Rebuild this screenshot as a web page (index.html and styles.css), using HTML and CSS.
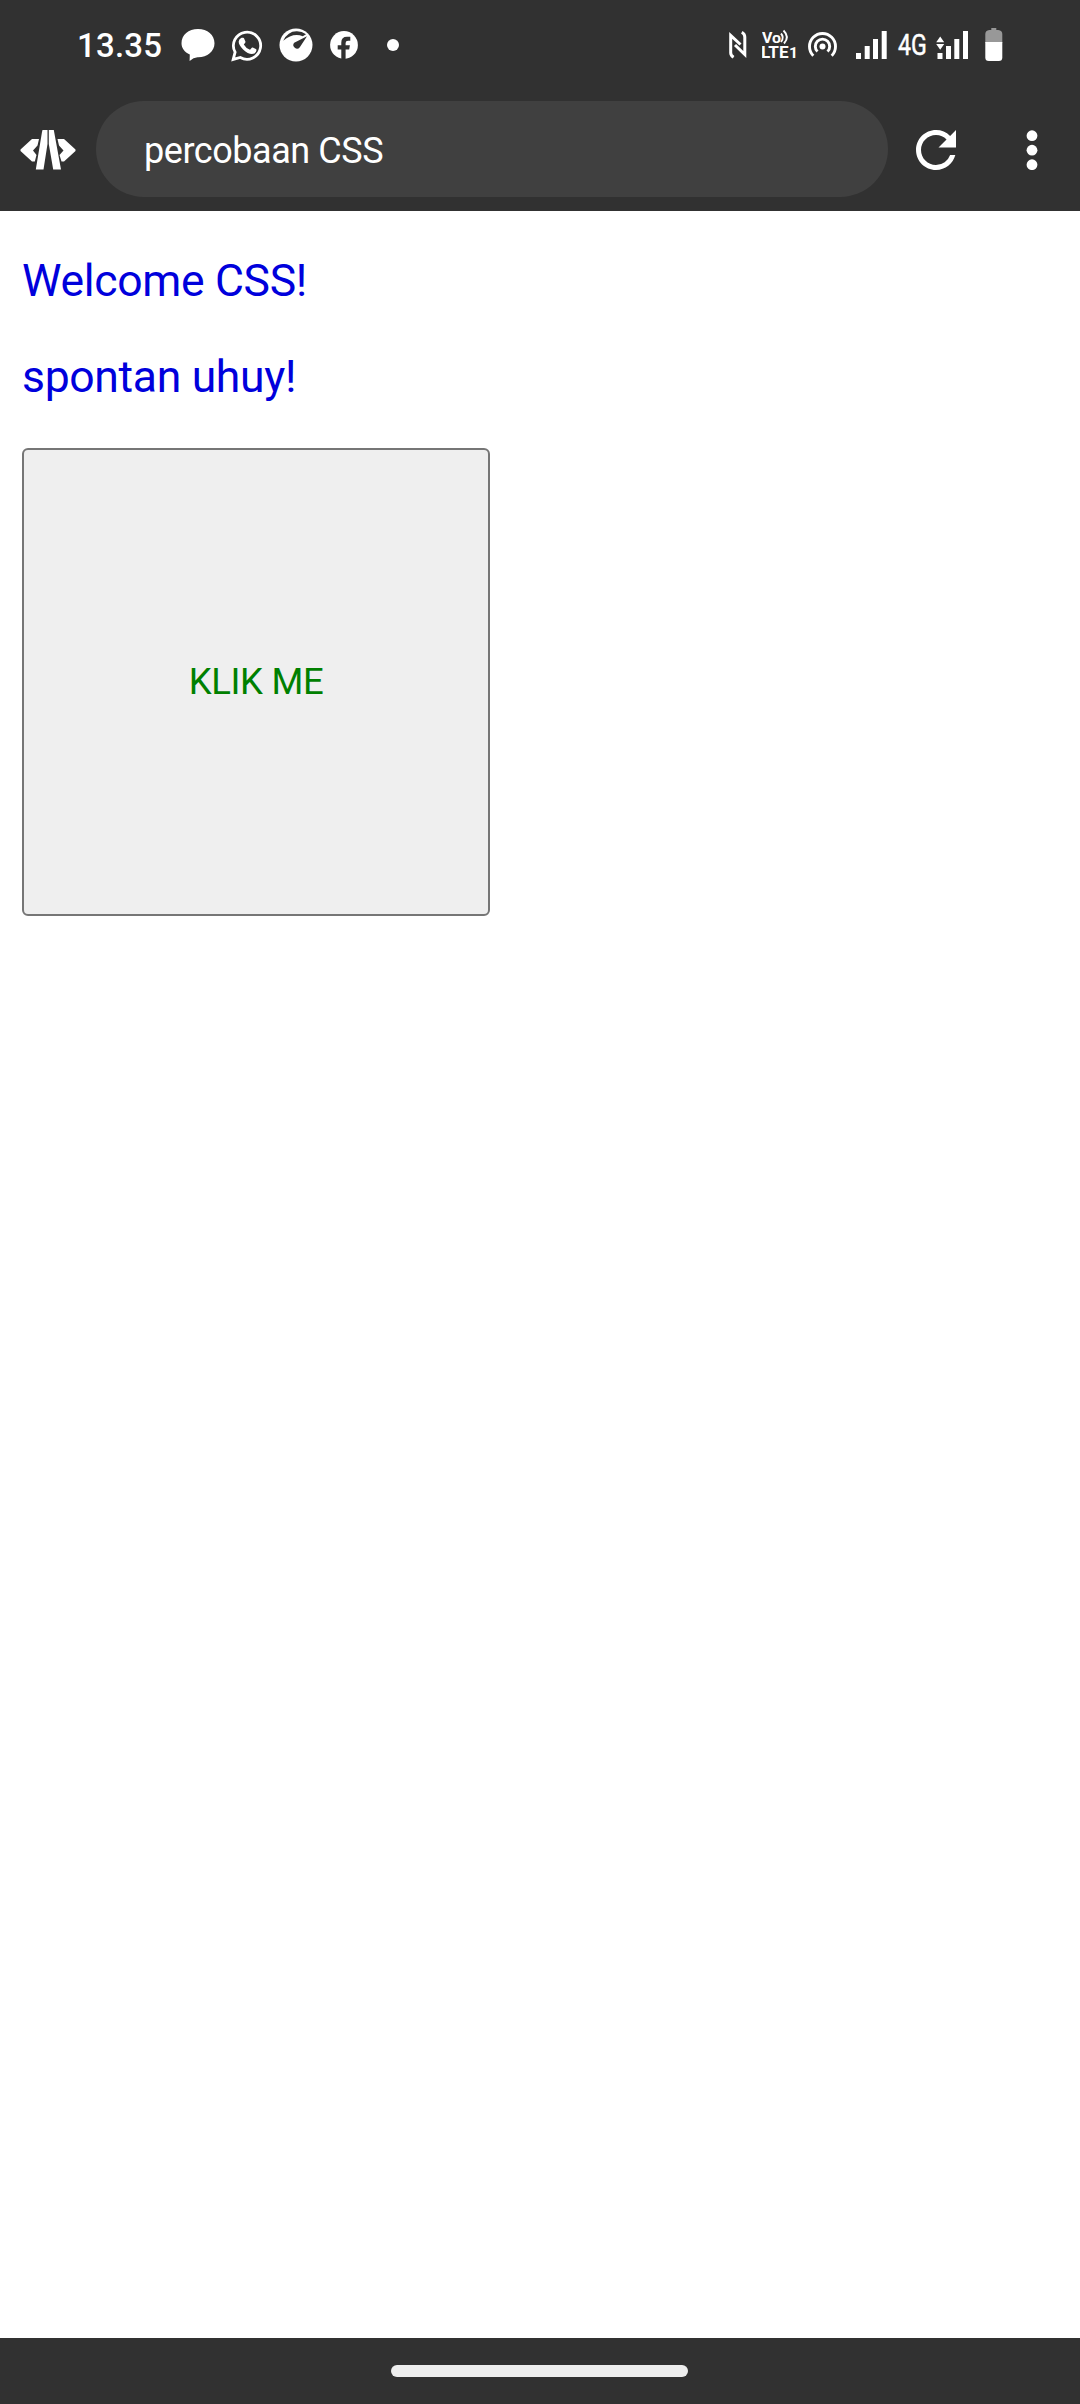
FILE: index.html
```html
<!DOCTYPE html>
<html lang="id">
<head>
<meta charset="utf-8">
<title>percobaan CSS</title>
<link rel="stylesheet" href="styles.css">
</head>
<body>
<header class="chrome">
  <div class="status">
    <div class="status-group status-left">
      <span class="clock">13.35</span>
      <svg class="icon" width="34" height="34" viewBox="0 0 34 34"><path d="M17 1C26.500 1 33.500 7 33.500 15.200S26 29.500 16.500 29.200Q12.500 29.500 8.600 33L8.800 26.500C3.500 24 .5 20 .5 15.200.5 7 7.500 1 17 1Z"/></svg>
      <svg class="icon" width="32" height="34" viewBox="0 0 32 34"><path class="line" stroke-width="2.800" d="M2.200 31.400 4.100 24.200A13.600 13.600 0 1 1 9.300 29.500Z"/><path d="M10.600 9.700h1.500q.7 0 1 .8l1.300 3.100q.2.600-.2 1.100l-1.400 1.700q2.300 4 6.200 5.400l1.800-2.100q.4-.5 1-.2l3 1.400q.8.400.7 1.100-.3 4-4.600 4-4 0-8.800-4.500Q7.500 17 7.700 13.500q.2-2.600 2.900-3.800Z"/></svg>
      <svg class="icon" width="34" height="34" viewBox="0 0 34 34"><circle cx="17" cy="17" r="16.500"/><path class="cut" d="M4.200 12.800Q9 3 18 3.300q5 0 9 3l-3.200 2Q14 4.500 4.200 12.800ZM28 8.200 20.800 19.200A3.500 3.500 0 1 1 15.200 14.800Z"/></svg>
      <svg class="icon icon-fb" width="28" height="28" viewBox="0 0 28 28"><circle cx="14" cy="14" r="13.900"/><path class="cut" d="M11.300 28V18.600H7.700V14.200h3.600V11.500q0-5.700 5.700-5.700h3.300v3.900h-2.200q-2.500 0-2.500 2.400v2.100h4.300l-.7 4.400h-3.600V28Z"/></svg>
      <span class="dot"></span>
    </div>
    <div class="status-group status-right">
      <svg class="icon icon-nfc" width="18" height="28" viewBox="0 0 18 28"><path class="line" stroke-width="3" d="M4.600 26.300Q1.700 24.500 1.700 22V4.500L11.500 13.500M12.800 1.300Q15.800 3 15.800 6V23.500L6 14"/></svg>
      <svg class="icon icon-volte" width="36" height="32" viewBox="0 0 36 32"><text class="mini" x="0" y="13.800" font-size="14" textLength="19" lengthAdjust="spacingAndGlyphs">Vo</text><path class="line" stroke-width="1.900" d="M19 4.500Q22.500 8.500 19 13M21.500 1.500Q28 8 22 14.500"/><text class="mini" x="-1" y="28.500" font-size="16" textLength="27.500" lengthAdjust="spacingAndGlyphs">LTE</text><text class="mini" x="27" y="28.500" font-size="14.500" textLength="9" lengthAdjust="spacingAndGlyphs">1</text></svg>
      <svg class="icon icon-hotspot" width="29" height="26" viewBox="0 0 29 26"><circle cx="14.500" cy="14.500" r="3"/><path class="line" stroke-width="2.900" d="M5.300 23.700A13 13 0 1 1 23.700 23.700M9.500 19.500A7.200 7.200 0 1 1 19.500 19.500"/></svg>
      <svg class="icon icon-sig" width="32" height="28" viewBox="0 0 32 28"><path d="M0 22h5v6H0zM8.700 15h5v13h-5zM17 8h5v20h-5zM25.700 0h5v28h-5z"/></svg>
      <span class="net">4G</span>
      <svg class="icon icon-sig2" width="32" height="28" viewBox="0 0 32 28"><path d="M.2 11.300 4.200 5.500 8.200 11.300ZM.2 13H8.200L4.200 18.800ZM1.500 22h5v6h-5zM10 15h5v13h-5zM18.300 8h5v20h-5zM27 0h5v28h-5z"/></svg>
      <svg class="icon icon-bat" width="18" height="34" viewBox="0 0 18 34"><path class="bat-empty" d="M6.300 0h5v2h2Q17.300 2.500 17.300 6V15H.3V6Q.3 2.500 4.300 2h2Z"/><path d="M.3 14h17V29.500q0 3.500-3.500 3.500h-10Q.3 33 .3 29.500Z"/></svg>
    </div>
  </div>
  <div class="toolbar">
    <svg class="icon icon-tool" width="56" height="42" viewBox="0 0 56 42"><path d="M22.500 1h5V15L23.500 40.500H15.800L22 3ZM28.800 1h5L41 40.500H33.200L28.800 15ZM12 10H19L17.500 16.500 13 21.500 16.500 26 14.800 32.500H12L.5 22V20.500ZM37.500 10H44L55.500 20.500V22L44 32.500H41.500L39.500 26 43.500 21.500 39 16.500Z"/></svg>
    <div class="address">percobaan CSS</div>
    <svg class="icon icon-tool icon-reload" width="40" height="40" viewBox="4 4 16 16"><path d="M17.650 6.350A7.958 7.958 0 0 0 12 4c-4.420 0-7.990 3.580-7.990 8s3.570 8 7.990 8c3.730 0 6.840-2.550 7.730-6h-2.080A5.990 5.990 0 0 1 12 18c-3.310 0-6-2.690-6-6s2.690-6 6-6c1.660 0 3.140.69 4.220 1.780L13 11h7V4l-2.350 2.350z"/></svg>
    <svg class="icon icon-tool" width="12" height="40" viewBox="0 0 12 40"><circle cx="6" cy="5.700" r="5.400"/><circle cx="6" cy="20.200" r="5.400"/><circle cx="6" cy="34.700" r="5.400"/></svg>
  </div>
</header>
<main class="page">
  <p class="text">Welcome CSS!</p>
  <p class="text">spontan uhuy!</p>
  <button class="click-button" type="button">KLIK ME</button>
</main>
<footer class="nav"><span class="handle"></span></footer>
</body>
</html>
```
FILE: styles.css
```css
* { box-sizing: border-box; }

body {
  margin: 0;
  height: 2404px;
  display: flex;
  flex-direction: column;
  background: #fff;
  font-family: Roboto, sans-serif;
}

.chrome { height: 211px; background: #313131; color: #fff; }

.status {
  height: 89px;
  padding: 0 77px 0 77px;
  display: flex;
  justify-content: space-between;
}

.status-group { display: flex; align-items: center; }
.status-left { gap: 16px; }
.clock { width: 88px; font-size: 33px; font-weight: 500; line-height: 40px; letter-spacing: 0.2px; white-space: nowrap; padding-top: 2px; }
.icon { display: block; flex: none; fill: #fff; }
.icon-fb { margin-left: 1px; }
.line { fill: none; stroke: #fff; }
.cut { fill: #313131; }
.dot { width: 12px; height: 12px; margin-left: 13px; border-radius: 50%; background: #fff; }

.icon-volte { margin-left: 15px; }
.icon-hotspot { margin-left: 10px; }
.icon-sig { margin-left: 19px; }
.net {
  width: 30px;
  margin-left: 10px;
  font-size: 29px;
  line-height: 34px;
  -webkit-text-stroke: 0.5px #fff;
  transform: scaleX(0.8);
  transform-origin: left center;
}
.icon-sig2 { margin-left: 8px; }
.icon-bat { margin-left: 17px; }
.bat-empty { fill: #989898; }
.mini { font-weight: 700; }

.toolbar {
  height: 122px;
  padding: 0 42px 2px 20px;
  display: flex;
  align-items: center;
}

.icon-tool { margin-top: 2px; }

.address {
  width: 792px;
  height: 96px;
  margin: 0 28px 0 20px;
  padding-left: 48px;
  border-radius: 48px;
  background: #404040;
  font-size: 36px;
  line-height: 101px;
  letter-spacing: -0.45px;
}

.icon-reload { margin-right: 70px; }

.page { flex: 1; padding: 45px 22px; }
.text { margin: 0 0 45px; font-size: 44.5px; line-height: 51px; letter-spacing: -0.33px; color: #0000dc; }

.click-button {
  display: block;
  width: 468px;
  height: 468px;
  margin-top: 44px;
  padding: 0 0 2px;
  border: 2px solid #767676;
  border-radius: 6px;
  background: #efefef;
  color: #008000;
  font: 36.5px Roboto, sans-serif;
  letter-spacing: -0.35px;
}

.nav { height: 66px; background: #313131; display: flex; justify-content: center; align-items: center; }
.handle { width: 297px; height: 12px; margin-right: 2px; border-radius: 6px; background: #eee; }
```
